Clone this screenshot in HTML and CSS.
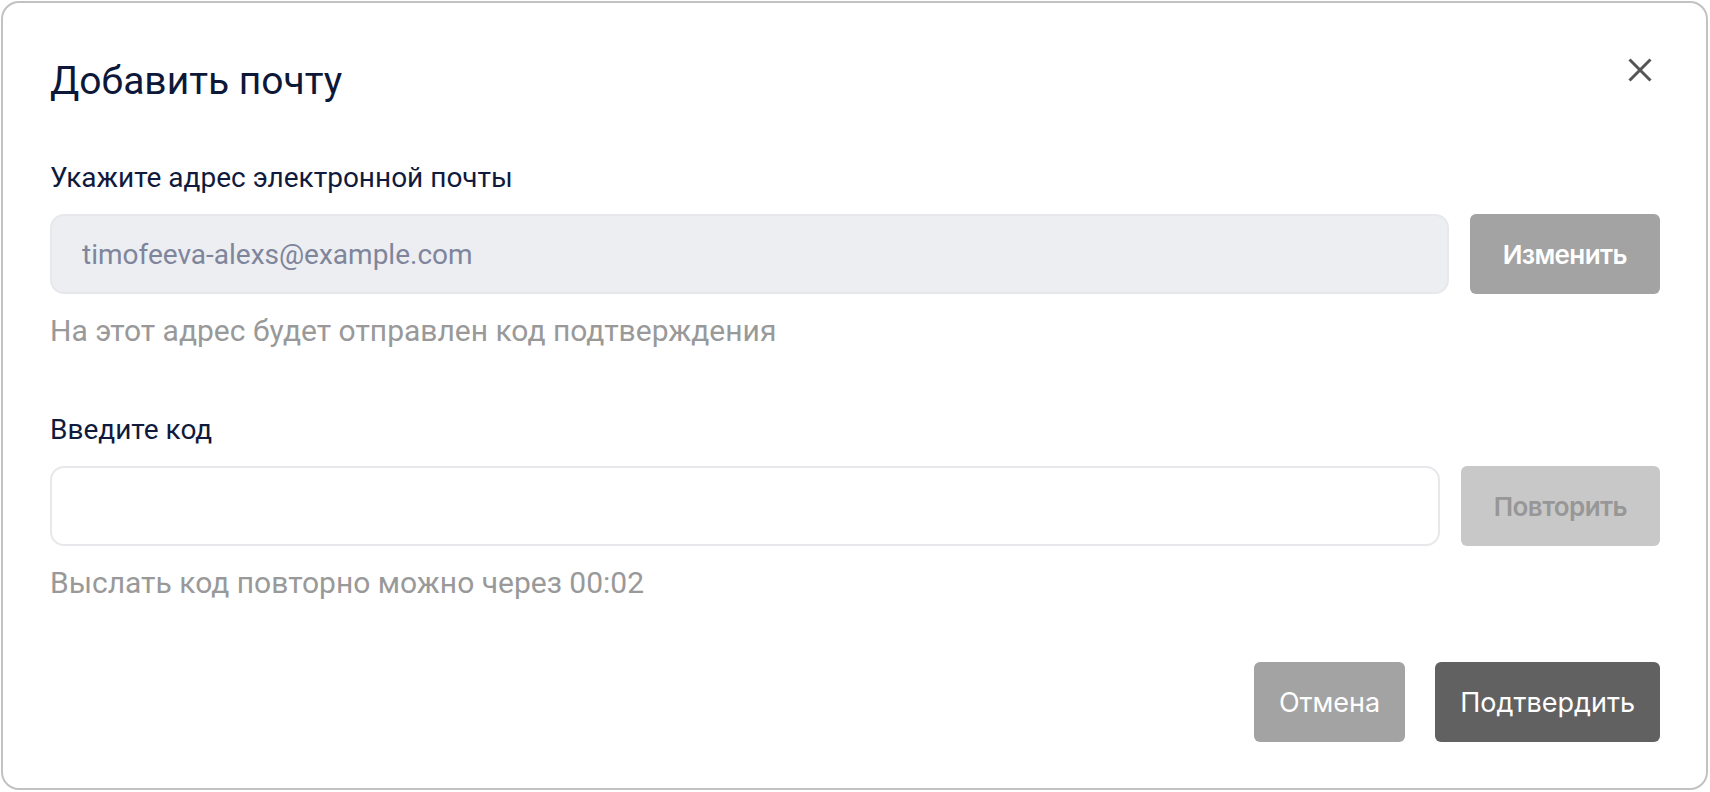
FILE: index.html
```html
<!DOCTYPE html>
<html lang="ru">
<head>
    <meta charset="UTF-8">
    <meta name="viewport" content="width=device-width, initial-scale=1.0">
    <title>Добавить почту</title>
    <link rel="stylesheet" href="styles.css">
</head>
<body>
    <div class="modal">
        <div class="modal-header">
            <h1>Добавить почту</h1>
            <button class="close-btn" type="button" aria-label="Закрыть">
                <svg width="24" height="24" viewBox="0 0 24 24" fill="none" stroke="currentColor" stroke-width="3">
                    <path d="M1.5 1.5L22.5 22.5M22.5 1.5L1.5 22.5"></path>
                </svg>
            </button>
        </div>

        <!-- Email -->
        <div class="field">
            <label for="email">Укажите адрес электронной почты</label>
            <div class="field-row">
                <input type="text" id="email" class="input input-locked" value="timofeeva-alexs@example.com" readonly>
                <button type="button" class="btn btn-gray btn-bold">Изменить</button>
            </div>
            <p class="hint">На этот адрес будет отправлен код подтверждения</p>
        </div>

        <!-- Code -->
        <div class="field field-code">
            <label for="code">Введите код</label>
            <div class="field-row">
                <input type="text" id="code" class="input">
                <button type="button" class="btn btn-disabled btn-bold">Повторить</button>
            </div>
            <p class="hint">Выслать код повторно можно через 00:02</p>
        </div>

        <div class="modal-footer">
            <button type="button" class="btn btn-gray">Отмена</button>
            <button type="submit" class="btn btn-dark">Подтвердить</button>
        </div>
    </div>
</body>
</html>
```

FILE: styles.css
```css
* {
    box-sizing: border-box;
    margin: 0;
    padding: 0;
}

html, body {
    height: 100%;
}

body {
    background-color: #ffffff;
    font-family: Roboto, 'Noto Sans', sans-serif;
    color: #101a3c;
    padding: 1px 2px 2px 1px;
}

.modal {
    height: 100%;
    display: flex;
    flex-direction: column;
    background-color: #fff;
    border: 2px solid #c2c2c2;
    border-radius: 18px;
    padding: 56px 46px 46px 47px;
}

.modal-header {
    display: flex;
    justify-content: space-between;
    align-items: flex-start;
    margin-bottom: 55px;
}

h1 {
    font-size: 39px;
    line-height: 44px;
    font-weight: 400;
    color: #0d1839;
}

.close-btn {
    display: flex;
    background: none;
    border: none;
    color: #555;
    cursor: pointer;
    margin: -1px 8px 0 0;
}

label {
    display: block;
    font-size: 28px;
    line-height: 40px;
    margin-bottom: 16px;
    color: #101a3c;
}

.field-row {
    display: flex;
    gap: 21px;
}

.input {
    flex: 1;
    height: 80px;
    border: 2px solid #e7e8eb;
    border-radius: 14px;
    padding: 0 30px;
    font-family: Roboto, sans-serif;
    font-size: 28px;
    color: #101a3c;
    background-color: #fff;
    outline: none;
}

.input-locked {
    background-color: #eceef1;
    color: #7f859b;
}

.hint {
    margin-top: 17px;
    font-size: 30px;
    line-height: 40px;
    color: #999;
}

.field-code {
    margin-top: 59px;
}

.btn {
    height: 80px;
    padding: 0 25px;
    border: none;
    border-radius: 6px;
    font-family: Inter, 'Liberation Sans', sans-serif;
    font-size: 27px;
    color: #fff;
    cursor: pointer;
}

.btn-bold {
    font-size: 26px;
    font-weight: 600;
    letter-spacing: -0.6px;
    padding: 0 33px;
}

.btn-gray {
    background-color: #a3a3a3;
}

.btn-disabled {
    background-color: #c8c8c8;
    color: #979797;
}

.btn-dark {
    background-color: #616161;
}

.modal-footer {
    margin-top: auto;
    display: flex;
    justify-content: flex-end;
    gap: 30px;
}
```
